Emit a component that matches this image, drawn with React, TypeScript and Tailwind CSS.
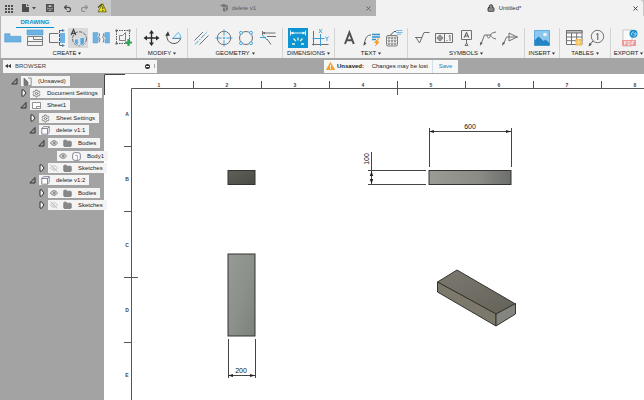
import { ReactNode } from 'react';
import { Eye, EyeOff, Folder, Lock, Redo2, Settings, Undo2, X } from 'lucide-react';

type ToolProps = { label: string; active?: 'gray' | 'blue'; children: ReactNode };

const Tool = ({ label, active, children }: ToolProps) => (
  <button
    type="button"
    aria-label={label}
    className={
      'h-5 w-5 shrink-0 ' +
      (active === 'gray' ? 'bg-[#d9d9d9]' : active === 'blue' ? 'bg-[#0d94d2]' : 'hover:bg-gray-200')
    }
  >
    <svg viewBox="0 0 20 20" className="block h-5 w-5" fill="none" stroke="#707070" strokeWidth="1">
      {children}
    </svg>
  </button>
);

type GroupProps = { title: string; className?: string; children: ReactNode };

const Group = ({ title, className = 'border-r px-1', children }: GroupProps) => (
  <div className={'flex shrink-0 flex-col items-center border-[#d4d4d4] ' + className}>
    <div className="flex gap-0.5">{children}</div>
    <button
      type="button"
      className="flex h-2.5 items-center gap-0.5 whitespace-nowrap font-['Liberation_Sans_Narrow','Liberation_Sans',sans-serif] text-[6px] leading-none text-[#222]"
    >
      {title}
      <svg viewBox="0 0 4 4" className="h-[3px] w-[3px]" fill="#333">
        <path d="M0 .5h4L2 3.5z" />
      </svg>
    </button>
  </div>
);

const TopBar = () => (
  <header className="flex h-4 bg-[#c9c9c9]">
    <div className="flex w-[111px] shrink-0 items-center pl-1 text-[#4d4d4d]">
      <button type="button" aria-label="Data panel" className="mr-2">
        <svg viewBox="0 0 9 9" className="h-[9px] w-[9px]" fill="#4d4d4d">
          {[1, 4, 7].map((y) => [1, 4, 7].map((x) => <rect key={x + '-' + y} x={x} y={y} width="2" height="2" />))}
        </svg>
      </button>
      <button type="button" aria-label="File" className="mr-2">
        <svg viewBox="0 0 16 10" className="h-2.5 w-4" fill="#4d4d4d">
          <path d="M1 1h4v3h3v5H1zM6 1l2 2H6zM11 4h4l-2 2.4z" />
        </svg>
      </button>
      <button type="button" aria-label="Save" className="mr-2">
        <svg viewBox="0 0 10 10" className="h-2.5 w-2.5" fill="none" stroke="#4d4d4d" strokeWidth="1.2">
          <path d="M1.6 1.6h6.8v6.8H1.6zM3 2v2.5h4V2M3 8.4V6.2h4v2.2" />
        </svg>
      </button>
      <button type="button" aria-label="Undo" className="mr-2">
        <Undo2 className="h-[9px] w-[9px]" strokeWidth={3} />
      </button>
      <button type="button" aria-label="Redo" className="mr-2 text-[#909090]">
        <Redo2 className="h-[9px] w-[9px]" strokeWidth={3} />
      </button>
      <button type="button" aria-label="Update reference">
        <svg viewBox="0 0 10 10" className="h-2.5 w-2.5" stroke="#454500" strokeWidth=".7">
          <path d="M1 8.8 5.8.8 9.3 8.8z" fill="#f5e616" />
          <path d="M1 4.5 5 1M5.8 3.5v2.8M5.8 7.1v1" strokeWidth="1.1" />
        </svg>
      </button>
    </div>
    <div className="flex flex-[265] items-center bg-[#b1b1b1] pr-1 text-[6px] text-[#5c5c5c]">
      <a href="#delete" className="flex flex-1 items-center justify-center gap-1">
        <svg viewBox="0 0 8 8" className="h-2 w-2" fill="#757575">
          <path d="M0 1.5 3 0l5 1.2v4.3L5.2 8 3 7V3z" />
          <path d="M3 3.2l2.4.6L8 1.6M5.4 3.8V8" fill="none" stroke="#b1b1b1" strokeWidth=".7" />
        </svg>
        delete v1
      </a>
      <button type="button" aria-label="Close delete v1">
        <X className="h-[7px] w-[7px]" strokeWidth={3} />
      </button>
    </div>
    <div className="mr-px flex flex-[267] items-center rounded-tr-sm bg-[#f2f2f2] pr-1 text-[6px] text-[#333]">
      <a href="#untitled" className="flex flex-1 items-center justify-center gap-1">
        <Lock className="h-2 w-2" fill="#909090" strokeWidth={2.5} />
        Untitled*
      </a>
      <button type="button" aria-label="Close Untitled">
        <X className="h-[7px] w-[7px]" strokeWidth={3} />
      </button>
    </div>
  </header>
);

const Ribbon = () => (
  <nav className="h-[42px] border-l border-[#b5b5b5] bg-[#f2f2f2]">
    <div className="flex pl-[15px]">
      <a
        href="#drawing"
        className="flex h-3 w-[38px] items-center justify-center border-b border-[#0d8fcc] font-['Liberation_Sans_Narrow','Liberation_Sans',sans-serif] text-[6px] font-bold text-[#0d8fcc]"
      >
        DRAWING
      </a>
    </div>
    <div className="flex">
      <Group title="CREATE" className="border-r pr-1 pl-px">
        <Tool label="Base view">
          <path d="M2.7 5.7H8v2.6h11V14H2.7z" fill="#6db2e2" stroke="#4f9cd2" strokeWidth=".6" />
        </Tool>
        <Tool label="Projected view">
          <path d="M3 2h16v5H3z" fill="#6db2e2" stroke="#4f9cd2" strokeWidth=".6" />
          <path d="M3.5 8.5h15v9h-15zM3.5 13.5h15M9.5 8.5v3h9" strokeWidth=".9" />
        </Tool>
        <Tool label="Section view">
          <path d="M12.5 5.5h-9v9h9" />
          <path d="M14 5h5v10h-5z" fill="#6db2e2" stroke="none" />
          <path d="M13.5 2v16" stroke="#555" strokeDasharray="3 1" />
          <path d="M13.5 2.5h4M13.5 17.5h4" stroke="#666" />
          <path d="M16 1l3 1.5L16 4zM16 16l3 1.5-3 1.5z" fill="#4a7fa8" stroke="none" />
        </Tool>
        <Tool label="Detail view" active="gray">
          <circle cx="11.5" cy="10.8" r="7" stroke="#666" strokeDasharray="3.4 1.2" />
          <path d="M6.5 11h3.8v6.5c-1.6-.4-3-1.400-3.800-3zM12 17.500V9.500h4.500v5.500c-1 1.500-2.500 2.300-4.500 2.500z" fill="#5aa9de" stroke="#eee" strokeWidth=".7" />
          <path d="M3.2 7 5.5 1.600 7.800 7M4 5.300h3" stroke="#444" strokeWidth="1.2" />
        </Tool>
        <Tool label="Break view">
          <path d="M3 4.5h5v2.2l-1 2 1.6 2L7.5 15H3zM15 4.5h4.5V15H15v-2.5l1-2-1.6-2z" fill="#6db2e2" stroke="#4f9cd2" strokeWidth=".5" />
          <path d="M9.5 5.5v2.2l-1 1.5 1.6 1.8-1 3.5M13.5 5.5v2.2l-1 1.5 1.6 1.8-1 3.5" stroke="#7a7a7a" />
        </Tool>
        <Tool label="Sketch">
          <path d="M4.5 2.5h13v13h-13z" stroke="#555" strokeDasharray="1.5 1" />
          <path d="M7.5 7.5h3l3-3v8h-6z" stroke="#808080" />
          <path d="M3.5 1.5h2v2h-2zM16.5 1.5h2v2h-2zM3.5 14.5h2v2h-2z" fill="#666" stroke="none" />
          <path d="M16.5 11v7M13 14.5h7" stroke="#2fa355" strokeWidth="2.2" />
        </Tool>
      </Group>
      <Group title="MODIFY">
        <Tool label="Move">
          <path d="M10.5 4.5v11M5 10h11" stroke="#2a2a2a" strokeWidth="1.4" />
          <path d="M10.5 2 13 5.5H8zM10.5 18 13 14.5H8zM2.5 10 6 7.5v5zM18.5 10 15 7.5v5z" fill="#2a2a2a" stroke="none" />
        </Tool>
        <Tool label="Rotate">
          <path d="M4 7a7 7 0 1 0 13.8 3M9.5 10.5h8" stroke="#555" />
          <path d="M9.8 10.2 15 4.5c2 1.5 2.9 3.4 2.9 5.7z" fill="#e4f2fb" stroke="#4aa3da" strokeWidth=".8" />
          <path d="M2.2 7.8 5 3.3l1.8 4.5z" fill="#333" stroke="none" />
        </Tool>
      </Group>
      <Group title="GEOMETRY">
        <Tool label="Centerline">
          <path d="M2.5 12.5 11 4M7.5 16.5 16.5 7.5" />
          <path d="M3 16.5 15.5 3.5" stroke="#3f9fd6" strokeDasharray="5 1.2 1.5 1.2" />
        </Tool>
        <Tool label="Center mark">
          <circle cx="10" cy="10" r="6.7" />
          <path d="M10 1.5v17M1.5 10h17" stroke="#3f9fd6" strokeDasharray="6.2 1.2 2.2 1.2" />
        </Tool>
        <Tool label="Center mark pattern">
          <circle cx="10" cy="10" r="6.5" />
          <g fill="#dff0fa" stroke="#3f9fd6" strokeWidth=".9">
            <circle cx="5" cy="4.8" r="1.5" />
            <circle cx="15" cy="4.8" r="1.5" />
            <circle cx="5" cy="15.2" r="1.5" />
            <circle cx="15" cy="15.2" r="1.5" />
          </g>
        </Tool>
        <Tool label="Edge extension">
          <path d="M4.5 3v4M4.5 5h13M9 8.5h9M9 11l4 5.5" />
          <path d="M2 9.5h6M4.5 7 9 12" stroke="#3f9fd6" />
          <path d="M4.5 5 7 3.7v2.6z" fill="#666" stroke="none" />
        </Tool>
      </Group>
      <Group title="DIMENSIONS">
        <Tool label="Dimension" active="blue">
          <path d="M2.5 2.5v5M17.5 2.5v5M3 5h14" stroke="#e9f6ff" />
          <path d="M3 5 5.5 3.6v2.8zM17 5l-2.500-1.400v2.800z" fill="#fff" stroke="none" />
          <path d="M10 9.500v3M5.500 10.500l2.300 2.500M14.500 10.500l-2.300 2.500M4 16h3M16 16h-3" stroke="#e9f7d8" strokeWidth="1.3" />
        </Tool>
        <Tool label="Ordinate dimension">
          <path d="M3.5 3v14.5M2 16.5h16.5" />
          <path d="M10.5 6v12M2.5 10.5h12" stroke="#3f9fd6" />
          <path d="M9 1l3 4M12 1 9 5M15.5 8.5l1.5 2 1.5-2M17 10.5V13" stroke="#3f9fd6" strokeWidth=".9" />
        </Tool>
      </Group>
      <Group title="TEXT">
        <Tool label="Text">
          <path d="M6 16 10.4 4.5 14.8 16M7.5 12.2h5.8" stroke="#505050" strokeWidth="2" />
        </Tool>
        <Tool label="Leader note">
          <path d="M3.5 16.5C4 10 6 7 10 7" stroke="#666" />
          <path d="M2.5 18l.5-4 2.4 1.2z" fill="#444" stroke="none" />
          <path d="M11 6.5h8M11 9h8M11 11.5h4" stroke="#2f93d0" strokeWidth="1.3" />
          <path d="M17 10.5 12.8 15h2.4l-1.4 3.8 5-5h-2.6l2-3.3z" fill="#f39a1e" stroke="none" />
        </Tool>
        <Tool label="Hole and thread note">
          <rect x="3.5" y="7.5" width="11" height="10.5" rx="1.5" strokeWidth=".9" />
          <g strokeWidth=".8">
            {[9.8, 12.8, 15.8].map((y) => [5.9, 9, 12.1].map((x) => <circle key={x + '-' + y} cx={x} cy={y} r=".9" />))}
          </g>
          <path d="M7.5 7 11 3.5h2" stroke="#555" />
          <path d="M13 2.5h6.5M13 4.5h6.5M14 6.2h4" stroke="#57a9db" strokeWidth=".8" />
        </Tool>
      </Group>
      <Group title="SYMBOLS">
        <Tool label="Surface texture">
          <path d="M3 9.5h7M4 9.5 7.500 15 12 4.500h5.500" />
        </Tool>
        <Tool label="Feature control frame">
          <path d="M1.5 5.5h17v9h-17zM10.5 5.5v9" />
          <circle cx="6" cy="10" r="2.3" />
          <path d="M6 6.7v6.6M2.7 10h6.6M13 13v-1M14.7 8.3l1.3-1V13" />
        </Tool>
        <Tool label="Datum identifier">
          <path d="M5.5 2.5h10v9h-10zM10.5 11.5V16M9 17.5h3l-1.5-2.5z" />
          <path d="M8.2 9.7 10.5 4.3l2.3 5.4M9 8h3" stroke="#555" />
        </Tool>
        <Tool label="Welding symbol">
          <path d="M3 16 6.5 7h6M9 7c.5 4 3 4 3.5 0M18 4c-3 .5-5 1.500-5.500 3 .5 2 2.500 3.500 5.500 4" />
          <path d="M1.8 18l.6-4 2.2 1z" fill="#555" stroke="none" />
        </Tool>
        <Tool label="Taper and slope">
          <path d="M3.5 16 6.5 9H18M9 5v8l8-4z" />
          <path d="M2 18l.8-4 2.2 1z" fill="#555" stroke="none" />
        </Tool>
      </Group>
      <Group title="INSERT" className="w-[35px] border-r">
        <Tool label="Insert image">
          <path d="M2.5 2.5h15v15h-15z" fill="#8cc8ee" stroke="#5eaee0" />
          <path d="M2.5 17.5v-5l4-4 5 4.5 2-1.5 4 3.5v2.5z" fill="#2585c4" stroke="none" />
          <circle cx="13" cy="6.5" r="1.8" fill="#f3faff" stroke="none" />
        </Tool>
      </Group>
      <Group title="TABLES">
        <Tool label="Table">
          <path d="M2.5 2.5H18v14H2.5zM7.5 5v11.5M12.7 5v11.5M2.5 9H18M2.5 12.7H18" fill="#fff" />
          <path d="M2.5 2.5H18V5H2.5z" fill="#bcbcbc" />
          <path d="M11.5 11H18v6.5h-6.5z" fill="#f5ad2e" stroke="none" />
          <path d="M14.7 10.5V18M11 14.2h7.5M12.2 11.7l5 5M17.2 11.7l-5 5" stroke="#fde6ab" strokeWidth=".8" />
        </Tool>
        <Tool label="Balloon">
          <circle cx="11.5" cy="8.5" r="6.2" />
          <path d="M7 13l-3.5 4M10.300 6.600l1.500-1.300V12" stroke="#555" />
          <path d="M2.5 18.5l1-3.7 2.2 2z" fill="#555" stroke="none" />
        </Tool>
      </Group>
      <Group title="EXPORT" className="w-[35px]">
        <Tool label="Export PDF">
          <path d="M4 2h9v16H4z" fill="#fafafa" stroke="#b5b5b5" strokeWidth=".7" />
          <path d="M3 12h14v6H3z" fill="#ec9b9b" stroke="none" />
          <path d="M5.5 17v-3.5H7v1.7H5.5M9 13.5h1.4l.8 1V16l-.8 1H9zM13 17v-3.5h2.2M13 15.2h1.7" stroke="#fff" strokeWidth=".7" />
          <circle cx="14.5" cy="5.8" r="4" fill="#168cca" stroke="none" />
          <path d="M13 7.5c-1.5-2 .5-4 2-3.5M16.5 4.5c1.5 2-.5 4-2 3.5M14.500 5.800h2" stroke="#d9effa" strokeWidth=".9" />
        </Tool>
      </Group>
    </div>
  </nav>
);

const StatusBar = () => (
  <div className="flex h-4 items-center bg-[#a5a5a5] pl-[3px]">
    <div className="flex h-[13px] w-[154px] shrink-0 items-center bg-[#f5f5f5] pl-0.5 text-[6px] text-[#444]">
      <button type="button" aria-label="Collapse browser">
        <svg viewBox="0 0 6 4" className="h-1 w-1.5" fill="#333">
          <path d="M3 0v4L0 2zM6 0v4L3 2z" />
        </svg>
      </button>
      <h2 className="ml-1 flex-1 font-['Liberation_Sans_Narrow','Liberation_Sans',sans-serif]">BROWSER</h2>
      <button type="button" aria-label="Panel options" className="mr-1 flex h-[5px] w-[5px] items-center justify-center rounded-full bg-[#333]">
        <span className="h-px w-[3px] bg-white" />
      </button>
      <span className="mr-0.5 h-1 w-px bg-[#aaa]" />
    </div>
    <div className="flex flex-1 justify-center">
      <div className="mr-[19px] flex h-[13px] w-[134px] items-center bg-[#f7f7f7] text-[6px] whitespace-nowrap text-[#222]">
        <svg viewBox="0 0 9 8" className="ml-0.5 h-2 w-[9px]">
          <path d="M4.5.5 8.7 7.7H.3z" fill="#f3a024" stroke="#e08a10" strokeWidth=".5" />
          <path d="M4.5 2.8v2.6M4.500 6v1" stroke="#fff" strokeWidth="1" />
        </svg>
        <strong className="ml-0.5 flex-1">Unsaved:</strong>
        <span className="mr-1">Changes may be lost</span>
        <button type="button" className="h-full w-[26px] border-l border-[#d0e0ea] text-[#1a7fb8]">
          Save
        </button>
      </div>
    </div>
  </div>
);

type Node = {
  name: string;
  kind: 'drawing' | 'settings' | 'sheet' | 'component' | 'folder' | 'body';
  open?: boolean;
  hidden?: boolean;
  children?: Node[];
};

const tree: Node[] = [
  {
    name: '(Unsaved)',
    kind: 'drawing',
    open: true,
    children: [
      { name: 'Document Settings', kind: 'settings' },
      {
        name: 'Sheet1',
        kind: 'sheet',
        open: true,
        children: [
          { name: 'Sheet Settings', kind: 'settings' },
          {
            name: 'delete v1:1',
            kind: 'component',
            open: true,
            children: [
              { name: 'Bodies', kind: 'folder', open: true, children: [{ name: 'Body1', kind: 'body' }] },
              { name: 'Sketches', kind: 'folder', hidden: true },
            ],
          },
          {
            name: 'delete v1:2',
            kind: 'component',
            open: true,
            children: [
              { name: 'Bodies', kind: 'folder' },
              { name: 'Sketches', kind: 'folder', hidden: true },
            ],
          },
        ],
      },
    ],
  },
];

const NodeIcon = ({ kind }: { kind: Node['kind'] }) => {
  if (kind === 'settings') return <Settings className="h-[9px] w-[9px] text-[#777]" strokeWidth={2.5} />;
  if (kind === 'folder') return <Folder className="h-[9px] w-[9px] text-[#777]" fill="#888" strokeWidth={2} />;
  return (
    <svg viewBox="0 0 9 9" className="h-[9px] w-[9px]" fill="#fff" stroke="#777" strokeWidth=".8">
      {kind === 'drawing' && (
        <>
          <path d="M1 1l4 4v3.500H1z" fill="#777" />
          <path d="M5 1h3.200v7.500H5.500" fill="none" />
        </>
      )}
      {kind === 'sheet' && <path d="M.5 1.5h8v6h-8zM4.5 7.500v-2h4" />}
      {kind === 'component' && (
        <path d="M.8 2.5 2.5.7h5.7v5.600L6.500 8.200H.8zM.8 2.500h5.700v5.700M6.500 2.500 8.200.7" stroke="#666c84" />
      )}
      {kind === 'body' && (
        <>
          <rect x=".7" y=".7" width="7.6" height="7.6" rx="2" stroke="#5d6278" />
          <path d="M3 3.5h2.500V8" fill="none" stroke="#9297b5" />
        </>
      )}
    </svg>
  );
};

const TreeItem = ({ node, depth }: { node: Node; depth: number }) => (
  <li>
    <div className="flex h-3 items-center">
      <button type="button" aria-label={'Toggle ' + node.name} className="flex h-2 w-2.5 shrink-0 items-center">
        {node.kind !== 'body' && (
          <svg viewBox="0 0 8 8" className="h-2 w-2" fill="#eee" stroke="#333" strokeWidth="1">
            {node.open ? <path d="M.8 7 6 1.5V7z" fill="#999" /> : <path d="M2 .8h1.5L6 4 3.5 7.200H2z" />}
          </svg>
        )}
      </button>
      <div className="flex h-2.5 items-center bg-[#f4f4f4] pr-1 pl-0.5 text-[6px] whitespace-nowrap text-[#222]">
        {(node.kind === 'folder' || node.kind === 'body') && (
          <button type="button" aria-label={'Show ' + node.name} className="mr-[5px]">
            {node.hidden ? (
              <EyeOff className="h-2 w-2 text-[#aaa]" strokeWidth={2} />
            ) : (
              <Eye className="h-2 w-2 text-[#666]" strokeWidth={2.5} />
            )}
          </button>
        )}
        <NodeIcon kind={node.kind} />
        <span className="ml-1.5">{node.name}</span>
      </div>
    </div>
    {node.children && (
      <ul className={depth > 0 ? 'mt-px pl-[9px]' : 'pl-[9px]'}>
        {node.children.map((child) => (
          <TreeItem key={child.name} node={child} depth={depth + 1} />
        ))}
      </ul>
    )}
  </li>
);

const columns = [1, 2, 3, 4, 5, 6, 7, 8];
const rows = ['A', 'B', 'C', 'D', 'E'];

// Sheet coordinates start at the top left corner of the paper
const Sheet = () => (
  <svg width="540" height="326" viewBox="0 0 540 326" className="shrink-0" aria-label="Drawing sheet">
    <defs>
      <linearGradient id="front" x1="0" x2="1" y1="0" y2="0">
        <stop offset="0" stopColor="#9b9b95" />
        <stop offset=".6" stopColor="#8b8c86" />
        <stop offset="1" stopColor="#6c6e6c" />
      </linearGradient>
      <linearGradient id="top" x1="0" x2="1" y1="0" y2="1">
        <stop offset="0" stopColor="#979b95" />
        <stop offset=".5" stopColor="#8d918b" />
        <stop offset="1" stopColor="#7d817b" />
      </linearGradient>
      <linearGradient id="side" x1="0" x2="1" y1="0" y2="1">
        <stop offset="0" stopColor="#5f6058" />
        <stop offset="1" stopColor="#4a4b45" />
      </linearGradient>
      <linearGradient id="iso" x1="0" x2="1" y1="0" y2="1">
        <stop offset="0" stopColor="#7c7970" />
        <stop offset="1" stopColor="#646158" />
      </linearGradient>
    </defs>

    <path d="M.5 21V.5H21" fill="none" stroke="#444" />
    <path d="M27.5 326V14.5H540" fill="none" stroke="#555" />
    <g stroke="#555">
      {columns.slice(0, 7).map((n) => (
        <path key={n} d={n === 4 ? 'M293.5 7v14' : `M${Math.round(21 + n * 68)}.5 7v7`} />
      ))}
      {rows.slice(0, 4).map((r, i) => (
        <path key={r} d={i === 2 ? 'M20 203.5h14' : `M20 ${Math.round(72 + i * 65.4)}.5h7`} />
      ))}
    </g>
    <g fontSize="5" fontWeight="bold" fill="#444" textAnchor="middle">
      {columns.map((n) => (
        <text key={n} x={Math.round(n * 68 - 13)} y="13">
          {n}
        </text>
      ))}
      {rows.map((r, i) => (
        <text key={r} x="23" y={Math.round(42 + i * 65.3)}>
          {r}
        </text>
      ))}
    </g>

    <g stroke="#33342f">
      <rect x="124" y="96.5" width="27" height="14" fill="url(#side)" />
      <rect x="124" y="180" width="27" height="82" fill="url(#top)" />
      <rect x="325" y="96.5" width="82" height="14" fill="url(#front)" />
      <path d="M333.5 208 353 196l58.500 34L392 240z" fill="url(#iso)" />
      <path d="M333.5 208 392 240v12l-58.500-34z" fill="#7c796c" />
      <path d="M392 240l19.500-10.500V240L392 252z" fill="#858580" />
    </g>

    <path
      d="M325.500 54v39M407.500 54v39M325 57.500h82M267.500 78v33M264 96.500h58M264 110.500h58M124.500 265v39M151.500 265v39M124 301.500h27"
      stroke="#444"
    />
    <path
      d="M325 57.5l5-1.500v3zM407 57.500l-5-1.500v3zM267.500 97l-1.700 5h3.400zM267.500 110l-1.700-5h3.400zM124 301.500l5-1.500v3zM151 301.500l-5-1.500v3z"
      fill="#222"
    />
    <g fontSize="7" fill="#111" textAnchor="middle">
      <text x="366" y="55">
        600
      </text>
      <text x="137" y="299">
        200
      </text>
      <text x="265" y="85" transform="rotate(-90 265 85)">
        100
      </text>
    </g>
  </svg>
);

const App = () => {
  return (
    <div className="flex min-h-screen flex-col overflow-hidden bg-white font-['Liberation_Sans',Arial,sans-serif] leading-none">
      <TopBar />
      <Ribbon />
      <StatusBar />
      <main className="flex flex-1">
        <aside className="w-[104px] shrink-0 bg-[#a3a3a3] pt-px pl-[11px]">
          <ul className="relative">
            {tree.map((node) => (
              <TreeItem key={node.name} node={node} depth={0} />
            ))}
          </ul>
        </aside>
        <Sheet />
      </main>
    </div>
  );
};

export default App;
